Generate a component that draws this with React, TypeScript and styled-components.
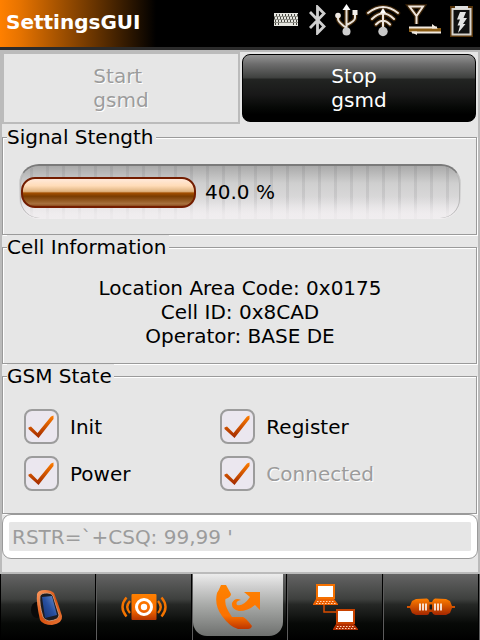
import React, { useState } from 'react';
import styled, { createGlobalStyle } from 'styled-components';

const GlobalStyle = createGlobalStyle`
  * { box-sizing: border-box; }
  body {
    margin: 0;
    background: #e6e6e6;
    color: #000;
    font: 20px/24px "DejaVu Sans", Verdana, sans-serif;
  }
  button, input { font: inherit; }
`;

const Page = styled.div`
  display: flex;
  flex-direction: column;
  min-height: 100vh;
`;

const TitleBar = styled.header`
  display: flex;
  align-items: center;
  justify-content: space-between;
  height: 50px;
  padding: 0 8px 4px 6px;
  border-bottom: 3px solid #2b2b2b;
  background: linear-gradient(to right, #ff8000 0, #e67300 20px, #000 156px);
`;

const Title = styled.h1`
  margin: 0;
  font-size: 20px;
  font-weight: bold;
  color: #fff;
`;

const StatusIcons = styled.div`
  display: flex;
  align-self: flex-start;
  gap: 9px;
  padding-top: 5px;
  svg { display: block; }
`;

const Content = styled.main`
  flex: 1;
  border: 2px solid #bbb;
`;

const ButtonRow = styled.div`
  display: grid;
  grid-template-columns: 1fr 1fr;
  padding-bottom: 1px;
`;

const DaemonButton = styled.button`
  display: flex;
  align-items: center;
  justify-content: center;
  height: 68px;
  margin: 2px;
  padding: 0;
  text-align: left;
  color: #fff;
  border: 1px solid #000;
  border-radius: 8px;
  background: linear-gradient(to bottom, #949494 0, #6c6c6c 14%, #404240 34%, #222422 37%, #181818 60%, #060806 80%, #000 90%);
  &:disabled {
    height: 72px;
    margin: 0;
    color: #9c9c9c;
    text-shadow: 1px 1px #fff;
    border: 2px solid #bbb;
    border-radius: 0;
    background: #e6e6e6;
  }
`;

const Group = styled.fieldset`
  min-width: 0;
  margin: 0 1px 0 0;
  padding: 15px 15px 15px 16px;
  border: 1px solid #9a9a9a;
  box-shadow: inset 1px 1px #fff, 1px 1px #fff;
`;

const Legend = styled.legend`
  margin-left: -12px;
  padding: 0 2px 0 0;
  background: #e6e6e6;
`;

const Meter = styled.div`
  display: grid;
  align-items: center;
  height: 55px;
  padding: 0 1px;
  border: 1px solid transparent;
  border-top: 2px solid #7a7a7a;
  border-radius: 20px;
  background:
    linear-gradient(to bottom, transparent 60%, rgba(240, 237, 239, 0.8) 92%) border-box,
    repeating-linear-gradient(to right, transparent 0 11px, rgba(90, 90, 95, 0.12) 11px 14px, transparent 14px 16px) border-box,
    linear-gradient(to bottom, #a6a6a6 0, #cfcfcf 35%, #dcdbdc 70%, #f2eff1 100%) border-box;
  box-shadow: inset 1px 0 #b8b8b8, inset -1px 0 #b8b8b8;
  > * { grid-area: 1 / 1; }
`;

const MeterFill = styled.div`
  height: 31px;
  border: 2px solid #731d00;
  border-radius: 14px;
  background: linear-gradient(to bottom, #ffe9da 0, #ffdcb8 25%, #dfb27e 46%, #a34f00 52%, #7a3c00 64%, #a8713e 92%, #8c4a1c 100%);
`;

const MeterText = styled.span`
  justify-self: center;
`;

const CellInfo = styled.div`
  padding-top: 2px;
  text-align: center;
`;

const States = styled.div`
  display: grid;
  grid-template-columns: 5fr 6fr;
  row-gap: 12px;
  padding: 6px 5px 7px;
`;

const CheckLabel = styled.label<{ $dim?: boolean }>`
  display: flex;
  align-items: center;
  gap: 11px;
  color: ${p => (p.$dim ? '#9c9c9c' : '#000')};
  text-shadow: ${p => (p.$dim ? '1px 1px #fff' : 'none')};
`;

const CheckBox = styled.span`
  display: grid;
  svg, input { grid-area: 1 / 1; }
  svg { pointer-events: none; }
  input:not(:checked) + svg { visibility: hidden; }
`;

const CheckInput = styled.input`
  appearance: none;
  width: 35px;
  height: 35px;
  margin: 0;
  border: 2px solid #9c9c9c;
  border-radius: 8px;
  background: #ebe7ef;
`;

const LogField = styled.input`
  display: block;
  width: 100%;
  height: 45px;
  padding: 7px 6px;
  text-indent: 3px;
  color: #9c9c9c;
  border: 1px solid #9a9a9a;
  border-radius: 9px;
  outline: 0;
  background: linear-gradient(#e6e6e6, #e6e6e6) content-box, #fff;
`;

const TabBar = styled.nav`
  display: grid;
  grid-template-columns: repeat(5, 1fr);
  height: 66px;
  border-right: 1px solid #5c5c5c;
  background: linear-gradient(to bottom, #646464 0, #3e403e 38%, #262826 46%, #181a18 60%, #070907 75%, #000 100%);
`;

const Tab = styled.button`
  display: flex;
  align-items: center;
  justify-content: center;
  padding: 0 1px 0 0;
  border: solid #5c5c5c;
  border-width: 0 0 0 1px;
  background: none;
  box-shadow: inset -1px 0 #000;
  &:first-child { border-color: #000; }
  svg { display: block; }
`;

const ActiveFace = styled.span`
  display: flex;
  align-self: flex-start;
  justify-content: center;
  width: 100%;
  height: 62px;
  margin-right: 3px;
  padding-top: 8px;
  border-radius: 0 0 14px 14px;
  background: linear-gradient(to bottom, #ececec 0, #d0d0d0 20%, #a8aaa8 50%, #6e706e 100%);
`;

const KeyboardIcon = () => (
  <svg width="26" height="30" viewBox="0 0 26 30" aria-hidden="true">
    <rect y="8" width="24" height="13" fill="#e6e6e0" />
    <g fill="#4a4a44">
      {[0, 3, 6, 9, 12, 15, 18, 21].map(x => (
        <path key={x} d={`M${x + 2} 9h1v2h-1zM${x} 12h1v2h-1zM${x + 1} 15h1v2h-1z`} />
      ))}
      <path d="M1 18h1v2h-1zM4 18h1v2h-1zM19 18h1v2h-1zM22 18h1v2h-1z" />
    </g>
    <path d="M0 11.500H24M0 14.500H24M0 17.500H24" stroke="#8e8e86" strokeWidth="1" />
  </svg>
);

const BluetoothIcon = () => (
  <svg width="17" height="30" viewBox="0 0 17 30" aria-hidden="true">
    <path d="M1 7L15 21.500L8.500 28V2L15 8.500L1 23" fill="none" stroke="#cfcfcf" strokeWidth="2.800" />
  </svg>
);

const UsbIcon = () => (
  <svg width="23" height="30" viewBox="0 0 23 30" overflow="visible" aria-hidden="true">
    <g fill="none">
      <path d="M11.500 3V27M3 11V14Q3 17 11.500 23M20 8V13Q20 16 11.500 20" stroke="#7a4a10" strokeWidth="4.500" opacity=".55" />
      <path d="M11.500 3V27M3 11V14Q3 17 11.500 23M20 8V13Q20 16 11.500 20" stroke="#e8e2da" strokeWidth="2" />
    </g>
    <path d="M11.500 -1L15.500 5H7.500Z" fill="#fff" />
    <circle cx="3" cy="10.500" r="2.800" fill="#efe9e2" />
    <rect x="17.500" y="5" width="5" height="5" fill="#f4eee8" />
    <circle cx="11.500" cy="26.500" r="4" fill="#cfcfcf" />
  </svg>
);

const WifiIcon = () => (
  <svg width="32" height="30" viewBox="0 0 32 30" overflow="visible" aria-hidden="true">
    <g fill="none" strokeLinecap="round">
      <path d="M1 8Q16 -4 31 8M5 14Q16 3 27 14M9 19.500Q16 12 23 19.500M16 6V26" stroke="#7a4a10" strokeWidth="4.500" opacity=".5" />
      <path d="M1 8Q16 -4 31 8M5 14Q16 3 27 14M9 19.500Q16 12 23 19.500M16 6V26" stroke="#ece4dc" strokeWidth="2" />
    </g>
    <path d="M16 3L19 8H13Z" fill="#fff" />
    <circle cx="16" cy="26.500" r="4.700" fill="#c8c8c8" />
  </svg>
);

const AntennaIcon = () => (
  <svg width="34" height="30" viewBox="0 0 34 30" overflow="visible" aria-hidden="true">
    <path d="M1.500 1.500H15L8.500 11Z M8.500 10V19" fill="none" stroke="#7a4a10" strokeWidth="4.500" opacity=".5" />
    <path d="M1.500 1.500H15L8.500 11Z M8.500 10V19" fill="none" stroke="#eee4da" strokeWidth="2" />
    <path d="M1 25H33" stroke="#8a5c14" strokeWidth="4" />
    <path d="M1 22.500H29M4 27.500H33" stroke="#f1e9df" strokeWidth="2" />
    <path d="M24 19L30 23.500H24ZM9 30L2 26.500H9Z" fill="#f1e9df" />
  </svg>
);

const BatteryIcon = () => (
  <svg width="21" height="30" viewBox="0 0 21 30" overflow="visible" aria-hidden="true">
    <rect x="1" y="3" width="19" height="27" fill="none" stroke="#7a4a10" strokeWidth="4" opacity=".7" />
    <rect x="1.500" y="4" width="18" height="25.500" fill="#111" stroke="#d8d4ce" strokeWidth="2" />
    <rect x="4" y="1" width="13" height="3" fill="#dedede" />
    <path d="M9 7H15L12.500 13H16L12 19H14.500L7 28L9 20.500H6.500L9 14.500H6Z" fill="#e4e4e4" />
  </svg>
);

const CheckMark = () => (
  <svg width="35" height="35" viewBox="0 0 35 35" aria-hidden="true">
    <defs>
      <linearGradient id="tick" x1="0" y1="0" x2="0" y2="1">
        <stop offset="0" stopColor="#ff7e00" />
        <stop offset="1" stopColor="#a02800" />
      </linearGradient>
    </defs>
    <path d="M4.500 18.500L7 17.500L13.500 24L27 7.500L29.500 6.500V10L14.500 29L4.500 20Z" fill="url(#tick)" />
  </svg>
);

const PhoneIcon = () => (
  <svg width="34" height="38" viewBox="0 0 34 38" aria-hidden="true">
    <defs>
      <linearGradient id="case" x1="0" y1="0" x2="1" y2="1">
        <stop offset="0" stopColor="#ff9c62" /><stop offset=".5" stopColor="#d8500c" /><stop offset="1" stopColor="#e87638" />
      </linearGradient>
      <linearGradient id="screen" x1="1" y1="0" x2="0" y2="1">
        <stop offset="0" stopColor="#6f94cf" /><stop offset=".5" stopColor="#2850a0" /><stop offset="1" stopColor="#14306e" />
      </linearGradient>
    </defs>
    <ellipse cx="6" cy="22" rx="6" ry="8" fill="#0a0a0a" />
    <path d="M6 6Q7 2 14 2Q20 2 23 5Q27 15 31 28Q32 35 21 37Q12 37 9 32Q5 14 6 6Z" fill="url(#case)" />
    <path d="M9 8Q10 5 16 5Q21 5 22 8L28 27Q28 32 18 33Q13 32 12 29Q8 16 9 8Z" fill="#1c1c20" stroke="#d9a484" strokeWidth=".8" />
    <path d="M11 9L21 8L26 27L14 30Z" fill="url(#screen)" />
  </svg>
);

const SpeakerIcon = () => (
  <svg width="46" height="28" viewBox="0 0 46 28" aria-hidden="true">
    <defs>
      <linearGradient id="speaker" x1="0" y1="0" x2="0" y2="1">
        <stop offset="0" stopColor="#ff8000" /><stop offset=".6" stopColor="#f86c00" /><stop offset="1" stopColor="#b43400" />
      </linearGradient>
    </defs>
    <rect x="10.500" y="1" width="25" height="26" rx="1" fill="url(#speaker)" />
    <circle cx="23" cy="14" r="7.500" fill="none" stroke="#fff" strokeWidth="3" />
    <circle cx="23" cy="14" r="3.200" fill="#fff" />
    <path
      d="M9 8Q3.500 14 9 20M5.500 4.500Q-2.500 14 5.500 23.500M37 8Q42.500 14 37 20M40.500 4.500Q48.500 14 40.500 23.500"
      fill="none"
      stroke="#f47400"
      strokeWidth="2.400"
    />
  </svg>
);

const CallIcon = () => (
  <svg width="46" height="48" viewBox="0 0 46 48" aria-hidden="true">
    <defs>
      <linearGradient id="call" gradientUnits="userSpaceOnUse" x1="0" y1="3" x2="0" y2="47">
        <stop offset="0" stopColor="#ff8200" /><stop offset=".7" stopColor="#fb7200" /><stop offset="1" stopColor="#bd3500" />
      </linearGradient>
    </defs>
    <path d="M6 3H11L16 12Q16 15 10.500 17Q9 24 17 35H28Q31 36 37 44Q36 47 33 47H23Q15 45 7 34Q-1 23 2 11Q4 8 6 3Z" fill="url(#call)" />
    <path d="M29 10H45V28L40 23Q33 29 24 29Q16 27 17 21Q20 15 26 18Q20 19 22 23Q28 25 35 15Z" fill="url(#call)" />
  </svg>
);

const NetworkIcon = () => (
  <svg width="46" height="48" viewBox="0 0 46 48" aria-hidden="true">
    <path d="M12 21V29H25" fill="none" stroke="#d84c00" strokeWidth="1.500" />
    <g fill="#fff" strokeWidth="2">
      <rect x="5" y="2" width="17" height="13" stroke="#f47000" />
      <rect x="25" y="27" width="17" height="13" stroke="#c84200" />
    </g>
    <path d="M4 16H22L26 21V22H1V21Z" fill="#ec6000" />
    <path d="M24 41H42L46 46V47H21V46Z" fill="#b02e00" />
    <path d="M5 18.500H22M4 20.500H24M25 43.500H42M24 45.500H44" stroke="#ffd6b8" strokeWidth="1" strokeDasharray="1.500 1.500" />
  </svg>
);

const ConnectorIcon = () => (
  <svg width="48" height="18" viewBox="0 0 48 18" aria-hidden="true">
    <defs>
      <linearGradient id="plug" x1="0" y1="0" x2="0" y2="1">
        <stop offset="0" stopColor="#ff7e00" /><stop offset="1" stopColor="#a32600" />
      </linearGradient>
    </defs>
    <path d="M0 8H3L5 3L9 1L20 .500Q22 1 22.500 4H25Q26 1 28 .500L39 1L43 3L45 8H48V10H45L43 15L39 17H28Q26 17 25 14H22.500Q22 17 20 17H9L5 15L3 10H0Z" fill="url(#plug)" />
    <path d="M22.500 6.500H25V11.500H22.500Z" fill="#181818" />
    <path d="M13 5.500V12.500M16 5.500V12.500M19 5.500V12.500M28 5.500V12.500M31 5.500V12.500M34 5.500V12.500" stroke="#fff" strokeWidth="1.600" />
  </svg>
);

const initialStates = [
  { name: 'Init', on: true, dim: false },
  { name: 'Register', on: true, dim: false },
  { name: 'Power', on: true, dim: false },
  { name: 'Connected', on: true, dim: true },
];

export default function App() {
  const [states, setStates] = useState(initialStates);
  const signal = 40;
  const toggle = (name: string) =>
    setStates(list => list.map(s => (s.name === name ? { ...s, on: !s.on } : s)));

  return (
    <Page>
      <GlobalStyle />
      <TitleBar>
        <Title>SettingsGUI</Title>
        <StatusIcons>
          <KeyboardIcon />
          <BluetoothIcon />
          <UsbIcon />
          <WifiIcon />
          <AntennaIcon />
          <BatteryIcon />
        </StatusIcons>
      </TitleBar>
      <Content>
        <ButtonRow>
          <DaemonButton type="button" disabled><span>Start<br />gsmd</span></DaemonButton>
          <DaemonButton type="button"><span>Stop<br />gsmd</span></DaemonButton>
        </ButtonRow>
        <Group>
          <Legend>Signal Stength</Legend>
          <Meter role="progressbar" aria-label="Signal Stength" aria-valuenow={signal} aria-valuemin={0} aria-valuemax={100}>
            <MeterFill style={{ width: `${signal}%` }} />
            <MeterText>{signal.toFixed(1)} %</MeterText>
          </Meter>
        </Group>
        <Group>
          <Legend>Cell Information</Legend>
          <CellInfo>
            <div>Location Area Code: 0x0175</div>
            <div>Cell ID: 0x8CAD</div>
            <div>Operator: BASE DE</div>
          </CellInfo>
        </Group>
        <Group>
          <Legend>GSM State</Legend>
          <States>
            {states.map(s => (
              <CheckLabel key={s.name} $dim={s.dim}>
                <CheckBox>
                  <CheckInput type="checkbox" checked={s.on} disabled={s.dim} onChange={() => toggle(s.name)} />
                  <CheckMark />
                </CheckBox>
                {s.name}
              </CheckLabel>
            ))}
          </States>
        </Group>
        <LogField aria-label="Modem response" disabled value="RSTR=`+CSQ: 99,99 '" />
      </Content>
      <TabBar>
        <Tab type="button" aria-label="Phone"><PhoneIcon /></Tab>
        <Tab type="button" aria-label="Audio"><SpeakerIcon /></Tab>
        <Tab type="button" aria-label="GSM" aria-current="page"><ActiveFace><CallIcon /></ActiveFace></Tab>
        <Tab type="button" aria-label="Network"><NetworkIcon /></Tab>
        <Tab type="button" aria-label="Connections"><ConnectorIcon /></Tab>
      </TabBar>
    </Page>
  );
}
